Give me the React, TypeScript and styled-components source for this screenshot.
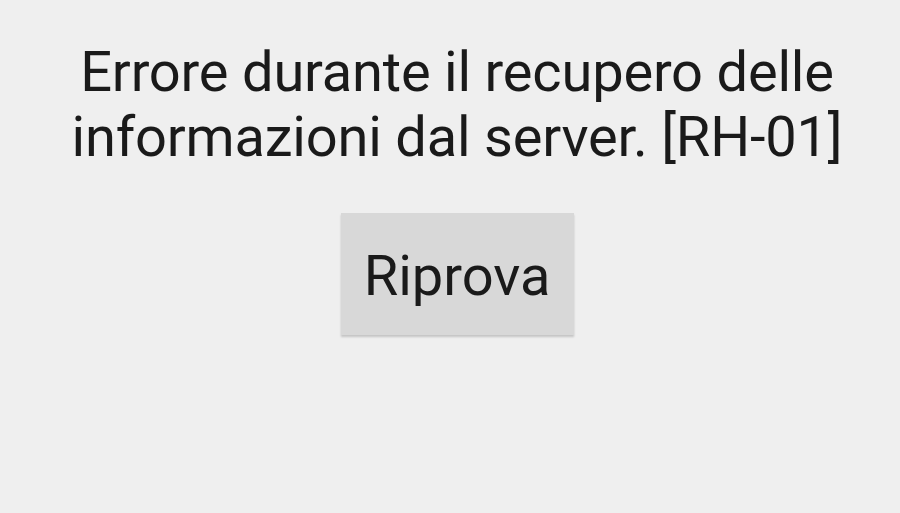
import React from "react";
import styled, { createGlobalStyle } from "styled-components";

const Global = createGlobalStyle`
  html, body { margin: 0; padding: 0; background: #efefef; }
  body { font-family: Roboto, "Noto Sans", sans-serif; }
`;

const Screen = styled.div`
  width: 900px;
  height: 513px;
  background: #efefef;
  display: flex;
  flex-direction: column;
  align-items: center;
  padding-top: 40px;
  padding-left: 14px;
  box-sizing: border-box;
  overflow: hidden;
`;

const Message = styled.p`
  margin: 0;
  font-size: 56px;
  line-height: 65px;
  letter-spacing: -0.2px;
  color: #1a1a1a;
  text-align: center;
  font-weight: 400;
  white-space: nowrap;
`;

const RetryButton = styled.button`
  margin-top: 43px;
  width: 233px;
  height: 122px;
  border: none;
  background: #d8d8d8;
  box-shadow: 0 2px 2px rgba(0, 0, 0, 0.18);
  font-family: Roboto, "Noto Sans", sans-serif;
  font-size: 56px;
  color: #1a1a1a;
  padding: 3px 0 0 0;
`;

export default function App() {
  return (
    <>
      <Global />
      <Screen>
        <Message>
          Errore durante il recupero delle
          <br />
          informazioni dal server. [RH-01]
        </Message>
        <RetryButton>Riprova</RetryButton>
      </Screen>
    </>
  );
}
